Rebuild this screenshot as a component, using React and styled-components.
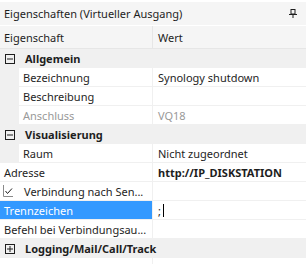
import React from 'react'
import styled, { createGlobalStyle } from 'styled-components'

const GlobalStyle = createGlobalStyle`
  body {
    margin: 0;
    background: #ffffff;
    font-family: "Noto Sans", "Open Sans", sans-serif;
    font-size: 11px;
    color: #1e1e1e;
  }
`

const Panel = styled.div`
  width: 306px;
  height: 264px;
  display: flex;
  flex-direction: column;
  background: #ffffff;
  overflow: hidden;
  border-top: 2px solid #ffffff;
`

const TitleBar = styled.div`
  display: flex;
  align-items: center;
  justify-content: space-between;
  height: 23px;
  padding: 0 9px 0 4px;
  background: #f5f5f5;
  color: #1e1e1e;
`

const Header = styled.div`
  display: grid;
  grid-template-columns: 152px 1fr;
  height: 22px;
  background: #f5f5f5;
  border-top: 1px solid #ffffff;
  border-bottom: 1px solid #e6e6e6;
`

const HeaderCell = styled.div`
  display: flex;
  align-items: center;
  padding-left: ${p => (p.$right ? '5px' : '4px')};
  border-left: ${p => (p.$right ? '1px solid #e6e6e6' : 'none')};
`

const Row = styled.div`
  display: grid;
  grid-template-columns: 152px 1fr;
  height: 19px;
  background: #ffffff;
`

const CategoryRow = styled.div`
  display: flex;
  align-items: center;
  gap: 10px;
  height: 19px;
  padding-left: 5px;
  background: #f0f0f0;
  font-weight: 700;
  white-space: nowrap;
`

const NameCell = styled.div`
  display: flex;
  align-items: center;
  gap: 11px;
  padding-left: ${p => p.$pad}px;
  border-left: ${p => (p.$indent ? '19px solid #f0f0f0' : 'none')};
  border-bottom: 1px solid #f0f0f0;
  background: ${p => (p.$selected ? '#3399ff' : 'transparent')};
  color: ${p => (p.$selected ? '#ffffff' : p.$disabled ? '#999999' : '#1e1e1e')};
  white-space: nowrap;
  overflow: hidden;
  min-width: 0;
`

const ValueCell = styled.div`
  display: flex;
  align-items: center;
  padding-left: 5px;
  border-left: 1px solid #f0f0f0;
  border-bottom: 1px solid #f0f0f0;
  color: ${p => (p.$disabled ? '#999999' : '#1e1e1e')};
  font-weight: ${p => (p.$bold ? 700 : 400)};
  white-space: nowrap;
`

const Caret = styled.span`
  display: inline-block;
  width: 1px;
  height: 13px;
  margin-left: 2px;
  background: #000000;
`

const Filler = styled.div`
  flex: 1;
  display: grid;
  grid-template-columns: 152px 1fr;
`

const FillerRight = styled.div`
  border-left: 1px solid #f0f0f0;
`

const ExpandBox = ({ open }) => (
  <svg width="10" height="10" viewBox="0 0 10 10">
    <rect x="0.5" y="0.5" width="9" height="9" fill="none" stroke="#1e1e1e" />
    <line x1="2" y1="5" x2="8" y2="5" stroke="#1e1e1e" />
    {!open && <line x1="5" y1="2" x2="5" y2="8" stroke="#1e1e1e" />}
  </svg>
)

const CheckGlyph = () => (
  <svg width="10" height="12" viewBox="0 0 10 12">
    <polyline points="0.5,0 0.5,11.5 10,11.5" fill="none" stroke="#8a8a8a" />
    <polyline points="2.5,6 4.5,8.5 9,3.5" fill="none" stroke="#1e1e1e" />
  </svg>
)

const PinIcon = () => (
  <svg width="8" height="9" viewBox="0 0 8 9">
    <rect x="2" y="0.5" width="4" height="4.5" fill="none" stroke="#1e1e1e" />
    <line x1="0" y1="5.5" x2="8" y2="5.5" stroke="#1e1e1e" />
    <line x1="4" y1="6" x2="4" y2="9" stroke="#1e1e1e" />
  </svg>
)

const Category = ({ open, children }) => (
  <CategoryRow>
    <ExpandBox open={open} />
    <span>{children}</span>
  </CategoryRow>
)

export default function App() {
  return (
    <>
      <GlobalStyle />
      <Panel>
        <TitleBar>
          <span>Eigenschaften (Virtueller Ausgang)</span>
          <PinIcon />
        </TitleBar>
        <Header>
          <HeaderCell>Eigenschaft</HeaderCell>
          <HeaderCell $right>Wert</HeaderCell>
        </Header>

        <Category open>Allgemein</Category>
        <Row>
          <NameCell $indent $pad={4}>Bezeichnung</NameCell>
          <ValueCell>Synology shutdown</ValueCell>
        </Row>
        <Row>
          <NameCell $indent $pad={4}>Beschreibung</NameCell>
          <ValueCell />
        </Row>
        <Row>
          <NameCell $indent $pad={4} $disabled>Anschluss</NameCell>
          <ValueCell $disabled>VQ18</ValueCell>
        </Row>

        <Category open>Visualisierung</Category>
        <Row>
          <NameCell $indent $pad={4}>Raum</NameCell>
          <ValueCell>Nicht zugeordnet</ValueCell>
        </Row>
        <Row>
          <NameCell $pad={4}>Adresse</NameCell>
          <ValueCell $bold>http://IP_DISKSTATION</ValueCell>
        </Row>
        <Row>
          <NameCell $pad={3}>
            <CheckGlyph />
            <span>Verbindung nach Sen...</span>
          </NameCell>
          <ValueCell />
        </Row>
        <Row>
          <NameCell $pad={4} $selected>Trennzeichen</NameCell>
          <ValueCell>;<Caret /></ValueCell>
        </Row>
        <Row>
          <NameCell $pad={4}>Befehl bei Verbindungsau...</NameCell>
          <ValueCell />
        </Row>

        <Category>Logging/Mail/Call/Track</Category>
        <Filler>
          <div />
          <FillerRight />
        </Filler>
      </Panel>
    </>
  )
}
